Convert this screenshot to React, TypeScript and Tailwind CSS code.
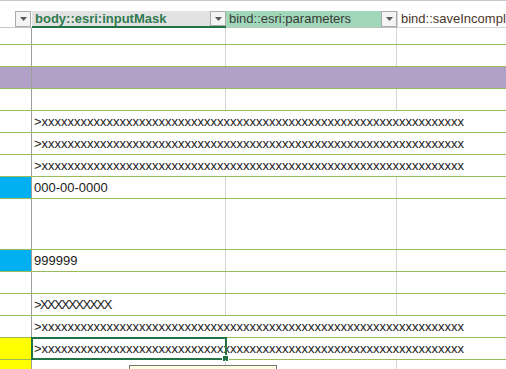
const lower = '>' + 'x'.repeat(65);

type Row = {
  h: string;
  a?: string;
  text?: string;
  upper?: boolean;
  over?: boolean;
  bg?: string;
  sel?: boolean;
  last?: boolean;
};

const rows: Row[] = [
  { h: 'h-[17px]' },
  { h: 'h-[22px]' },
  { h: 'h-[22px]', bg: 'bg-[#b1a0c7]', over: true },
  { h: 'h-[22px]' },
  { h: 'h-[22px]', text: lower, over: true },
  { h: 'h-[22px]', text: lower, over: true },
  { h: 'h-[22px]', text: lower, over: true },
  { h: 'h-[22px]', a: 'bg-[#00b0f0]', text: '000-00-0000' },
  { h: 'h-[51px]' },
  { h: 'h-[22px]', a: 'bg-[#00b0f0]', text: '999999' },
  { h: 'h-[22px]' },
  { h: 'h-[22px]', text: '>XXXXXXXXXX', upper: true },
  { h: 'h-[22px]', text: lower, over: true },
  { h: 'h-[22px]', a: 'bg-[#ffff00]', text: lower, over: true, sel: true },
  { h: 'h-[22px]', a: 'bg-[#ffff00]', last: true },
];

function Dropdown({ short }: { short?: boolean }) {
  return (
    <div
      className={`w-[16px] ${short ? 'h-[15px]' : 'h-[16px]'} shrink-0 border border-[#ababab] bg-[#f4f4f4] flex items-center justify-center`}
    >
      <svg width="7" height="4" viewBox="0 0 7 4">
        <path d="M0 0h7L3.5 4z" fill="#5a5a5a" />
      </svg>
    </div>
  );
}

export default function App() {
  return (
    <div className="relative w-[506px] h-[369px] overflow-hidden bg-white text-[13px] text-[#1b1b1b] font-['Liberation_Sans',Arial,sans-serif]">
      {/* table header */}
      <div className="h-[28px] border-t border-[#c8c8c8] flex items-end">
        <div className="w-[32px] h-[17px] shrink-0 flex justify-end border-b border-[#c8c8c8]">
          <div className="mr-[1px]">
            <Dropdown />
          </div>
        </div>
        <div className="w-[194px] h-[17px] shrink-0 flex items-start justify-between bg-[#e2e2e2] border-b-2 border-[#217346]">
          <span className="pl-[3px] leading-[15px] font-bold text-[#2f7a4f] whitespace-nowrap">body::esri:inputMask</span>
          <Dropdown short />
        </div>
        <div className="w-[171px] h-[17px] shrink-0 flex items-start justify-between bg-[#a0d8b9] border-b border-[#b8c4bc]">
          <span className="pl-[3px] leading-[16px] text-[#3a3a3a] whitespace-nowrap">bind::esri:parameters</span>
          <Dropdown />
        </div>
        <div className="flex-1 min-w-0 h-[17px] border-l border-[#d4d4d4] border-b border-b-[#d4d4d4] pl-[3px] leading-[16px] text-[#4b3628] whitespace-nowrap">
          bind::saveIncomplete
        </div>
      </div>

      {rows.map((r, i) => (
        <div
          key={i}
          className={`relative flex ${r.h} ${r.last ? '' : 'border-b border-[#9bbb59]'} ${r.bg ?? ''}`}
        >
          <div className={`w-[32px] shrink-0 border-r border-[#9e9e9e] ${r.a ?? ''}`} />
          <div
            className={`w-[194px] shrink-0 flex items-center pl-[2px] border-r ${r.over ? 'border-transparent' : 'border-[#d4d4d4]'}`}
          >
            {r.text && (
              <span className={`whitespace-nowrap ${r.upper ? 'tracking-[-1.6px]' : ''}`}>{r.text}</span>
            )}
          </div>
          <div className={`w-[171px] shrink-0 border-r ${r.over ? 'border-transparent' : 'border-[#d4d4d4]'}`} />
          <div className="flex-1" />

          {r.sel && (
            <div className="absolute left-[31px] top-[-1px] w-[196px] h-[23px] border-2 border-[#217346]">
              <div className="absolute right-[-4px] bottom-[-4px] w-[7px] h-[7px] bg-[#217346] border border-white" />
            </div>
          )}
          {r.last && (
            <div className="absolute left-[129px] top-[5px] w-[148px] h-[24px] bg-[#ffffe1] border border-[#767676]" />
          )}
        </div>
      ))}
    </div>
  );
}
